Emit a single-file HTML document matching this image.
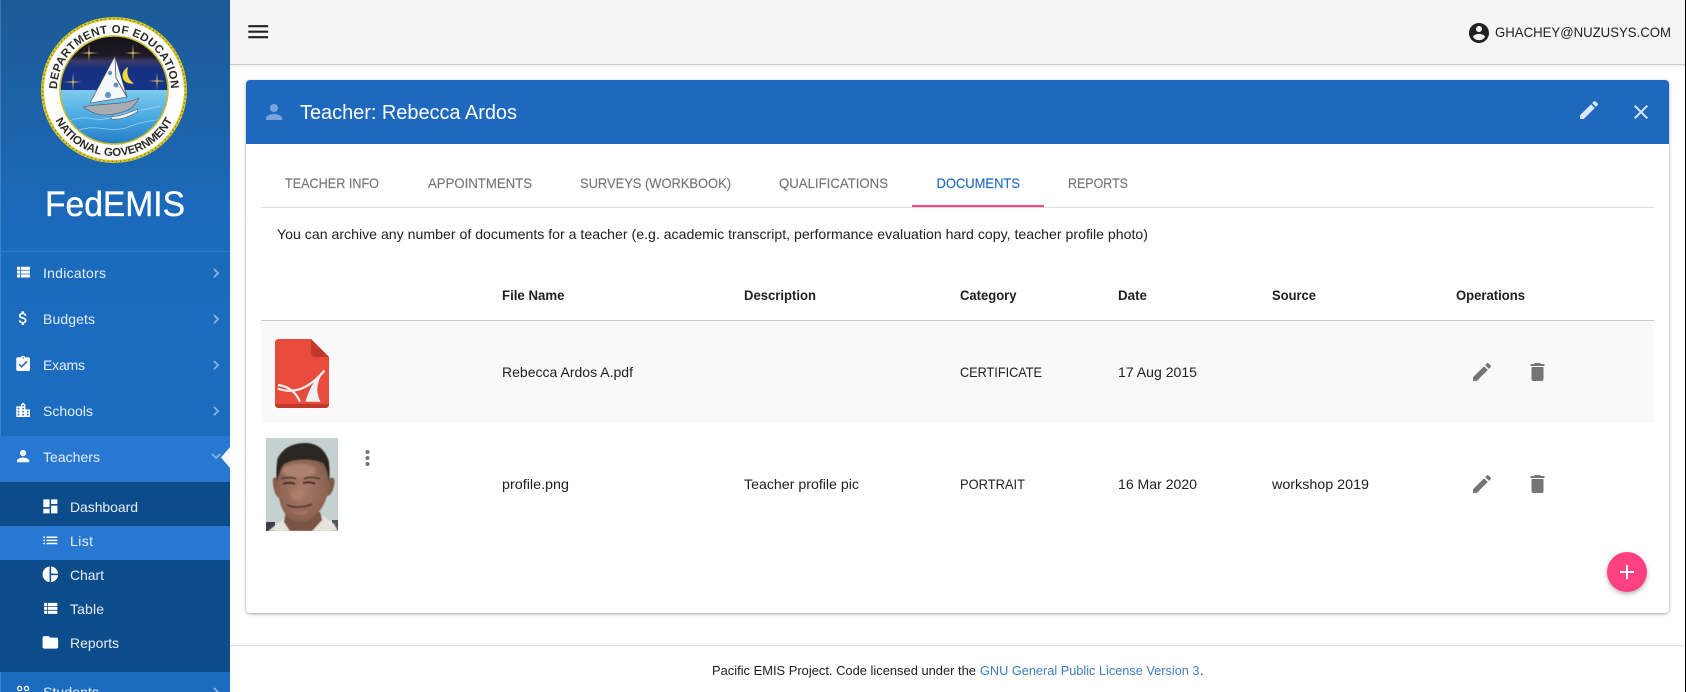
<!DOCTYPE html>
<html lang="en">
<head>
<meta charset="utf-8">
<title>FedEMIS - Teacher: Rebecca Ardos</title>
<style>
html,body{margin:0;padding:0;width:1686px;height:692px;overflow:hidden;background:#fff}
div{position:absolute;box-sizing:border-box}
#side{left:0;top:0;width:230px;height:692px;background:linear-gradient(180deg,#1c5a96 0,#1b6bbd 235px,#1b6cc0 692px)}
#top{left:230px;top:0;width:1456px;height:65px;background:#f5f5f5;border-bottom:1px solid #c9c9c9;box-shadow:0 1px 2px rgba(0,0,0,.08)}
#card{left:246px;top:80px;width:1423px;height:533px;background:#fff;border-radius:4px;box-shadow:0 1px 3px rgba(0,0,0,.35)}
#hd{left:246px;top:80px;width:1423px;height:64px;background:#1e68bd;border-radius:4px 4px 0 0}
svg{position:absolute;left:0;top:0}
text{font-family:"Liberation Sans",sans-serif;font-size:14px;fill:#212121}
.n text{fill:#e6eff9}
.t text{fill:#757575;stroke:#757575;stroke-width:.15px}
.h text{font-weight:700}
</style>
</head>
<body>
<div id="side"></div>
<div style="left:0;top:0;width:1px;height:692px;background:rgba(255,255,255,.18)"></div>
<div style="left:0;top:251px;width:230px;height:1px;background:#2f7bcf"></div>
<div style="left:0;top:436px;width:230px;height:46px;background:#2878d2"></div>
<div style="left:0;top:482px;width:230px;height:190px;background:#0d4c8b"></div>
<div style="left:0;top:526px;width:230px;height:34px;background:#2878d2"></div>
<div id="top"></div>
<div id="card"></div>
<div id="hd"></div>
<div style="left:261px;top:207px;width:1393px;height:1px;background:#e0e0e0"></div>
<div style="left:912px;top:205px;width:132px;height:2px;background:#ff4081"></div>
<div style="left:261px;top:320px;width:1393px;height:1px;background:#c8c8c8"></div>
<div style="left:261px;top:321px;width:1393px;height:102px;background:#f9f9f9"></div>
<div style="left:230px;top:645px;width:1455px;height:1px;background:#e0e0e0"></div>
<div style="left:1607px;top:552px;width:40px;height:40px;border-radius:50%;background:#ff4081;box-shadow:0 2px 5px rgba(0,0,0,.3)"></div>
<div style="left:1685px;top:0;width:1px;height:692px;background:#000"></div>

<svg width="1686" height="692" viewBox="0 0 1686 692" xmlns="http://www.w3.org/2000/svg">
<defs>
<path id="i-table" d="M4 14h4v-4H4v4zm0 5h4v-4H4v4zM4 9h4V5H4v4zm5 5h12v-4H9v4zm0 5h12v-4H9v4zM9 5v4h12V5H9z"/>
<path id="i-money" d="M11.8 10.9c-2.27-.59-3-1.2-3-2.15 0-1.09 1.01-1.85 2.7-1.85 1.78 0 2.44.85 2.5 2.1h2.21c-.07-1.72-1.12-3.3-3.21-3.81V3h-3v2.16c-1.94.42-3.5 1.68-3.5 3.61 0 2.31 1.91 3.46 4.7 4.13 2.5.6 3 1.48 3 2.41 0 .69-.49 1.79-2.7 1.79-2.06 0-2.87-.92-2.98-2.1h-2.2c.12 2.19 1.76 3.42 3.68 3.83V21h3v-2.15c1.95-.37 3.5-1.5 3.5-3.55 0-2.84-2.43-3.81-4.7-4.4z"/>
<path id="i-assign" d="M19 3h-4.18C14.4 1.84 13.3 1 12 1c-1.3 0-2.4.84-2.82 2H5c-1.1 0-2 .9-2 2v14c0 1.1.9 2 2 2h14c1.1 0 2-.9 2-2V5c0-1.1-.9-2-2-2zm-7 0c.55 0 1 .45 1 1s-.45 1-1 1-1-.45-1-1 .45-1 1-1zm-2 14l-4-4 1.41-1.41L10 14.17l6.59-6.59L18 9l-8 8z"/>
<path id="i-city" d="M15 11V5l-3-3-3 3v2H3v14h18V11h-6zm-8 8H5v-2h2v2zm0-4H5v-2h2v2zm0-4H5V9h2v2zm6 8h-2v-2h2v2zm0-4h-2v-2h2v2zm0-4h-2V9h2v2zm0-4h-2V5h2v2zm6 12h-2v-2h2v2zm0-4h-2v-2h2v2z"/>
<path id="i-person" d="M12 12c2.21 0 4-1.79 4-4s-1.79-4-4-4-4 1.79-4 4 1.79 4 4 4zm0 2c-2.67 0-8 1.34-8 4v2h16v-2c0-2.66-5.33-4-8-4z"/>
<path id="i-dash" d="M3 13h8V3H3v10zm0 8h8v-6H3v6zm10 0h8V11h-8v10zm0-18v6h8V3h-8z"/>
<path id="i-list" d="M3 13h2v-2H3v2zm0 4h2v-2H3v2zm0-8h2V7H3v2zm4 4h14v-2H7v2zm0 4h14v-2H7v2zM7 7v2h14V7H7z"/>
<path id="i-pie" d="M11 2v20c-5.07-.5-9-4.79-9-10s3.93-9.5 9-10zm2.03 0v8.99H22c-.47-4.74-4.24-8.52-8.97-8.99zm0 11.01V22c4.74-.47 8.5-4.25 8.97-8.99h-8.97z"/>
<path id="i-folder" d="M10 4H4c-1.1 0-1.99.9-1.99 2L2 18c0 1.1.9 2 2 2h16c1.1 0 2-.9 2-2V8c0-1.1-.9-2-2-2h-8l-2-2z"/>
<path id="i-right" d="M10 6L8.59 7.41 13.17 12l-4.58 4.59L10 18l6-6z"/>
<path id="i-more" d="M16.59 8.59L12 13.17 7.41 8.59 6 10l6 6 6-6z"/>
<path id="i-people" d="M16.5 13c-1.2 0-3.07.34-4.5 1-1.43-.67-3.3-1-4.5-1C5.33 13 1 14.08 1 16.25V19h22v-2.75c0-2.17-4.33-3.25-6.5-3.25zm-4 4.5h-10v-1.25c0-.54 2.56-1.75 5-1.75s5 1.21 5 1.75v1.25zm9 0H14v-1.25c0-.46-.2-.86-.52-1.22.88-.3 1.96-.53 3.02-.53 2.44 0 5 1.21 5 1.75v1.25zM7.5 12c1.93 0 3.5-1.57 3.5-3.5S9.43 5 7.5 5 4 6.57 4 8.5 5.57 12 7.5 12zm0-5.5c1.1 0 2 .9 2 2s-.9 2-2 2-2-.9-2-2 .9-2 2-2zm9 5.5c1.93 0 3.5-1.57 3.5-3.5S18.43 5 16.5 5 13 6.57 13 8.5s1.57 3.5 3.5 3.5zm0-5.5c1.1 0 2 .9 2 2s-.9 2-2 2-2-.9-2-2 .9-2 2-2z"/>
<path id="i-edit" d="M3 17.25V21h3.75L17.81 9.94l-3.75-3.75L3 17.25zM20.71 7.04c.39-.39.39-1.02 0-1.41l-2.34-2.34c-.39-.39-1.02-.39-1.41 0l-1.83 1.83 3.75 3.75 1.83-1.83z"/>
<path id="i-del" d="M6 19c0 1.1.9 2 2 2h8c1.1 0 2-.9 2-2V7H6v12zM19 4h-3.5l-1-1h-5l-1 1H5v2h14V4z"/>
<path id="i-star" d="M0 -9 L.6 -.6 L9 0 L.6 .6 L0 9 L-.6 .6 L-9 0 L-.6 -.6 Z"/>
<clipPath id="inner"><circle cx="114" cy="90" r="54"/></clipPath>
<linearGradient id="sky" x1="0" y1="0" x2="0" y2="1"><stop offset="0" stop-color="#14121a"/><stop offset=".36" stop-color="#1d1a24"/><stop offset=".46" stop-color="#3a3a6a"/><stop offset=".6" stop-color="#16307f"/><stop offset="1" stop-color="#15358a"/></linearGradient>
<linearGradient id="sea" x1="0" y1="0" x2="0" y2="1"><stop offset="0" stop-color="#7fcbef"/><stop offset=".5" stop-color="#4aa9e2"/><stop offset="1" stop-color="#2179c4"/></linearGradient>
<radialGradient id="skin" cx=".47" cy=".55" r=".6"><stop offset="0" stop-color="#a97b68"/><stop offset=".65" stop-color="#8f6453"/><stop offset="1" stop-color="#6e4a3c"/></radialGradient>
<path id="arcTop" d="M57 90 A57 57 0 0 1 171 90" fill="none"/>
<path id="arcBot" d="M48 90 A66 66 0 0 0 180 90" fill="none"/>
<filter id="soft" x="-20%" y="-20%" width="140%" height="140%"><feGaussianBlur stdDeviation=".6"/></filter>
<filter id="soft2" x="-40%" y="-40%" width="180%" height="180%"><feGaussianBlur stdDeviation="1.4"/></filter>
</defs>

<!-- logo -->
<g>
<circle cx="114" cy="90" r="72.5" fill="#fff"/>
<circle cx="114" cy="90" r="71.5" fill="none" stroke="#d9c92e" stroke-width="3"/>
<circle cx="114" cy="90" r="71.5" fill="none" stroke="#6d6a20" stroke-width="1.2" stroke-dasharray="1.2 3"/>
<g clip-path="url(#inner)">
<rect x="60" y="36" width="108" height="55" fill="url(#sky)"/>
<rect x="60" y="90" width="108" height="55" fill="url(#sea)"/>
<path d="M68 122 C85 112 95 124 112 117 S140 112 160 106" fill="none" stroke="#a8dcf5" stroke-width=".7"/>
<path d="M75 132 C92 122 110 134 128 127 S150 122 165 118" fill="none" stroke="#a8dcf5" stroke-width=".6"/>
</g>
<circle cx="114" cy="90" r="54" fill="none" stroke="#c9bd2a" stroke-width="1.6"/>
<g fill="#e2c46a"><use href="#i-star" transform="translate(89,53)"/><use href="#i-star" transform="translate(133,53)"/><use href="#i-star" transform="translate(73,82)"/><use href="#i-star" transform="translate(157,81)"/></g>
<path d="M128 67 C119 72 121 85 134 83.5 C129 80 126 75 128 67 Z" fill="#f4d83a"/>
<path d="M115 56 L90 103 L127 97 Z" fill="#f5f7fb" stroke="#4a4a55" stroke-width=".6"/>
<path d="M115 56 L116 78 L127 97" fill="none" stroke="#4a4a55" stroke-width=".8"/>
<g fill="#5b94c8"><circle cx="110" cy="73" r="2.2"/><circle cx="116" cy="85" r="2.4"/><circle cx="108" cy="95" r="3"/></g>
<path d="M83 107 C96 103 124 106 139 98 C135 107 128 113 106 115 C96 115 89 111 83 107 Z" fill="#a8acb2" stroke="#55585f" stroke-width=".6"/>
<path d="M110 117 C122 116 130 112 138 109 L137 112 C130 116 122 120 112 119 Z" fill="#eef1f4" stroke="#55585f" stroke-width=".6"/>
<text style="font-size:11.5px;font-weight:700;fill:#2c2c28;letter-spacing:.35px"><textPath href="#arcTop" startOffset="50%" text-anchor="middle">DEPARTMENT OF EDUCATION</textPath></text>
<text style="font-size:11.5px;font-weight:700;fill:#2c2c28"><textPath href="#arcBot" startOffset="50%" text-anchor="middle">NATIONAL GOVERNMENT</textPath></text>
</g>
<text x="45" y="216" textLength="140" lengthAdjust="spacingAndGlyphs" style="font-size:35px;fill:#fff;stroke:#fff;stroke-width:.35px">FedEMIS</text>

<!-- sidebar nav -->
<g class="n">
<text x="43" y="278" textLength="63">Indicators</text>
<text x="43" y="324" textLength="52">Budgets</text>
<text x="43" y="370" textLength="42">Exams</text>
<text x="43" y="416" textLength="50">Schools</text>
<text x="43" y="462" textLength="57">Teachers</text>
<text x="70" y="512" textLength="68">Dashboard</text>
<text x="70" y="546" textLength="23">List</text>
<text x="70" y="580" textLength="34">Chart</text>
<text x="70" y="614" textLength="34">Table</text>
<text x="70" y="648" textLength="49">Reports</text>
<text x="43" y="697" textLength="56">Students</text>
</g>
<g fill="#fff">
<use href="#i-table" transform="translate(14,263) scale(.76)"/>
<use href="#i-money" transform="translate(14,309) scale(.76)"/>
<use href="#i-assign" transform="translate(14,355) scale(.76)"/>
<use href="#i-city" transform="translate(14,401) scale(.76)"/>
<use href="#i-person" transform="translate(14,447) scale(.76)"/>
<use href="#i-dash" transform="translate(41,497) scale(.78)"/>
<use href="#i-list" transform="translate(41,531) scale(.78)"/>
<use href="#i-pie" transform="translate(41,565) scale(.78)"/>
<use href="#i-table" transform="translate(41,599) scale(.78)"/>
<use href="#i-folder" transform="translate(41,633) scale(.78)"/>
<use href="#i-people" transform="translate(14,682) scale(.76)"/>
</g>
<g fill="#86b4e6" stroke="#86b4e6" stroke-width=".5">
<use href="#i-right" transform="translate(207,264) scale(.76)"/>
<use href="#i-right" transform="translate(207,310) scale(.76)"/>
<use href="#i-right" transform="translate(207,356) scale(.76)"/>
<use href="#i-right" transform="translate(207,402) scale(.76)"/>
<use href="#i-more" transform="translate(207,447) scale(.76)"/>
<use href="#i-right" transform="translate(207,683) scale(.76)"/>
</g>
<path d="M230 447 L221 457.5 L230 468 Z" fill="#f5f7fa"/>

<!-- top bar -->
<path fill="#212121" transform="translate(245,18.5) scale(1.1)" d="M3 18h18v-2H3v2zm0-5h18v-2H3v2zm0-7v2h18V6H3z"/>
<path fill="#212121" transform="translate(1467,21)" d="M12 2C6.48 2 2 6.48 2 12s4.48 10 10 10 10-4.48 10-10S17.52 2 12 2zm0 3c1.66 0 3 1.34 3 3s-1.34 3-3 3-3-1.34-3-3 1.34-3 3-3zm0 14.2c-2.5 0-4.71-1.28-6-3.22.03-1.99 4-3.08 6-3.08 1.99 0 5.97 1.09 6 3.08-1.29 1.94-3.5 3.22-6 3.22z"/>
<text x="1495" y="37" textLength="176" lengthAdjust="spacingAndGlyphs">GHACHEY@NUZUSYS.COM</text>

<!-- card header -->
<use href="#i-person" fill="#7aa5dc" transform="translate(262,100)"/>
<text x="300" y="119" textLength="217" style="font-size:20px;fill:#fff">Teacher: Rebecca Ardos</text>
<use href="#i-edit" fill="#d8e6f6" transform="translate(1577,98)"/>
<path fill="#d8e6f6" transform="translate(1629,100)" d="M19 6.41L17.59 5 12 10.59 6.41 5 5 6.41 10.59 12 5 17.59 6.41 19 12 13.41 17.59 19 19 17.59 13.41 12z"/>

<!-- tabs -->
<g class="t">
<text x="285" y="188" textLength="94" lengthAdjust="spacingAndGlyphs">TEACHER INFO</text>
<text x="428" y="188" textLength="104" lengthAdjust="spacingAndGlyphs">APPOINTMENTS</text>
<text x="580" y="188" textLength="151" lengthAdjust="spacingAndGlyphs">SURVEYS (WORKBOOK)</text>
<text x="779" y="188" textLength="109" lengthAdjust="spacingAndGlyphs">QUALIFICATIONS</text>
<text x="936.5" y="188" textLength="83.5" lengthAdjust="spacingAndGlyphs" style="fill:#1e6bc0;stroke:#1e6bc0">DOCUMENTS</text>
<text x="1068" y="188" textLength="60" lengthAdjust="spacingAndGlyphs">REPORTS</text>
</g>

<text x="277" y="239" textLength="871" lengthAdjust="spacingAndGlyphs">You can archive any number of documents for a teacher (e.g. academic transcript, performance evaluation hard copy, teacher profile photo)</text>

<!-- table head -->
<g class="h">
<text x="502" y="300" textLength="62.5" lengthAdjust="spacingAndGlyphs">File Name</text>
<text x="744" y="300" textLength="72" lengthAdjust="spacingAndGlyphs">Description</text>
<text x="960" y="300" textLength="56.5" lengthAdjust="spacingAndGlyphs">Category</text>
<text x="1118" y="300" textLength="29" lengthAdjust="spacingAndGlyphs">Date</text>
<text x="1272" y="300" textLength="44" lengthAdjust="spacingAndGlyphs">Source</text>
<text x="1456" y="300" textLength="69" lengthAdjust="spacingAndGlyphs">Operations</text>
</g>

<!-- row 1 -->
<text x="502" y="377" textLength="131" lengthAdjust="spacingAndGlyphs">Rebecca Ardos A.pdf</text>
<text x="960" y="377" textLength="82" lengthAdjust="spacingAndGlyphs">CERTIFICATE</text>
<text x="1118" y="377" textLength="79" lengthAdjust="spacingAndGlyphs">17 Aug 2015</text>
<g fill="#757575">
<use href="#i-edit" transform="translate(1470,360)"/>
<use href="#i-del" transform="translate(1525.5,360)"/>
<use href="#i-edit" transform="translate(1470,472)"/>
<use href="#i-del" transform="translate(1525.5,472)"/>
</g>

<!-- pdf icon -->
<path d="M279 339 H311 L329 357 V404 Q329 408 325 408 H279 Q275 408 275 404 V343 Q275 339 279 339 Z" fill="#e74c3c"/>
<path d="M275 404 H329 Q329 408 325 408 H279 Q275 408 275 404 Z" fill="#c0392b"/>
<path d="M311 339 L329 357 H316 Q311 357 311 352 Z" fill="#c0392b"/>
<g fill="none" stroke="#ecf0f1" stroke-width="2.2">
<path d="M277.7 388.5 C292 394 308 390 324.5 370.5"/>
<path d="M278 385 C288 386 296 392 300 401.7"/>
</g>
<path d="M305.5 401.7 C309 390 313 381 322 374 C316 385 316 393 320.5 401.7 Z" fill="#ecf0f1"/>

<!-- row 2 -->
<text x="502" y="489" textLength="67" lengthAdjust="spacingAndGlyphs">profile.png</text>
<text x="744" y="489" textLength="115" lengthAdjust="spacingAndGlyphs">Teacher profile pic</text>
<text x="960" y="489" textLength="65" lengthAdjust="spacingAndGlyphs">PORTRAIT</text>
<text x="1118" y="489" textLength="79" lengthAdjust="spacingAndGlyphs">16 Mar 2020</text>
<text x="1272" y="489" textLength="97" lengthAdjust="spacingAndGlyphs">workshop 2019</text>

<!-- portrait -->
<svg x="266" y="438" width="72" height="93" viewBox="0 0 72 93">
<rect width="72" height="93" fill="#c5d0d0"/>
<rect x="0" y="84" width="9" height="9" fill="#3a3d44"/>
<rect x="66" y="82" width="6" height="11" fill="#55565a"/>
<path d="M2 93 L12 85 L20 80 L48 80 L58 78 L68 86 L72 93 Z" fill="#e4e4dc" filter="url(#soft)"/>
<path d="M20 74 H54 L56 82 L46 93 H24 L18 84 Z" fill="#7a5444" filter="url(#soft)"/>
<path d="M7 44 C6 40 9 38 11 41 L11 22 C14 6 60 4 63 24 L63 41 C66 38 70 40 68 47 C67 54 64 58 61 58 C57 72 46 85 32 84 C22 83 15 72 13 60 C9 58 7 50 7 44 Z" fill="url(#skin)" filter="url(#soft)"/>
<path d="M11 43 C9 22 13 7 37 5 C58 4 66 20 63 44 C62 36 61 30 57 25 C46 20 28 20 18 26 C14 31 13 37 11 43 Z" fill="#2a2523" filter="url(#soft)"/>
<ellipse cx="33" cy="33" rx="17" ry="7" fill="#ad8170" filter="url(#soft2)"/>
<g fill="none" stroke="#4a3128" filter="url(#soft)">
<path d="M15 41 C20 39 26 39 30 41" stroke-width="1.2"/>
<path d="M38 41 C42 39 48 39 54 41" stroke-width="1.2"/>
<path d="M17 46 C21 44 26 45 29 46" stroke-width="1.5" stroke="#2e1f1a"/>
<path d="M37 45 C41 44 46 44 49 46" stroke-width="1.5" stroke="#2e1f1a"/>
<path d="M21 67 C27 70 39 70 46 66" stroke-width="1.3"/>
</g>
<ellipse cx="32" cy="57" rx="7" ry="5" fill="#ae7f6c" filter="url(#soft2)"/>
<path d="M25 72 C30 74 38 74 43 71 L41 76 C36 78 29 77 25 72 Z" fill="#a5705f" filter="url(#soft)"/>
</svg>
<g fill="#757575"><circle cx="367.5" cy="452" r="2"/><circle cx="367.5" cy="458" r="2"/><circle cx="367.5" cy="464" r="2"/></g>

<!-- fab -->
<path fill="#fff" transform="translate(1615,560)" d="M19 13h-6v6h-2v-6H5v-2h6V5h2v6h6v2z"/>

<!-- footer -->
<text x="712" y="675" textLength="264" lengthAdjust="spacingAndGlyphs" style="font-size:13px">Pacific EMIS Project. Code licensed under the</text>
<text x="980" y="675" textLength="219.5" lengthAdjust="spacingAndGlyphs" style="font-size:13px;fill:#3d7fc4">GNU General Public License Version 3</text>
<text x="1200" y="675" style="font-size:13px">.</text>
</svg>
</body>
</html>
